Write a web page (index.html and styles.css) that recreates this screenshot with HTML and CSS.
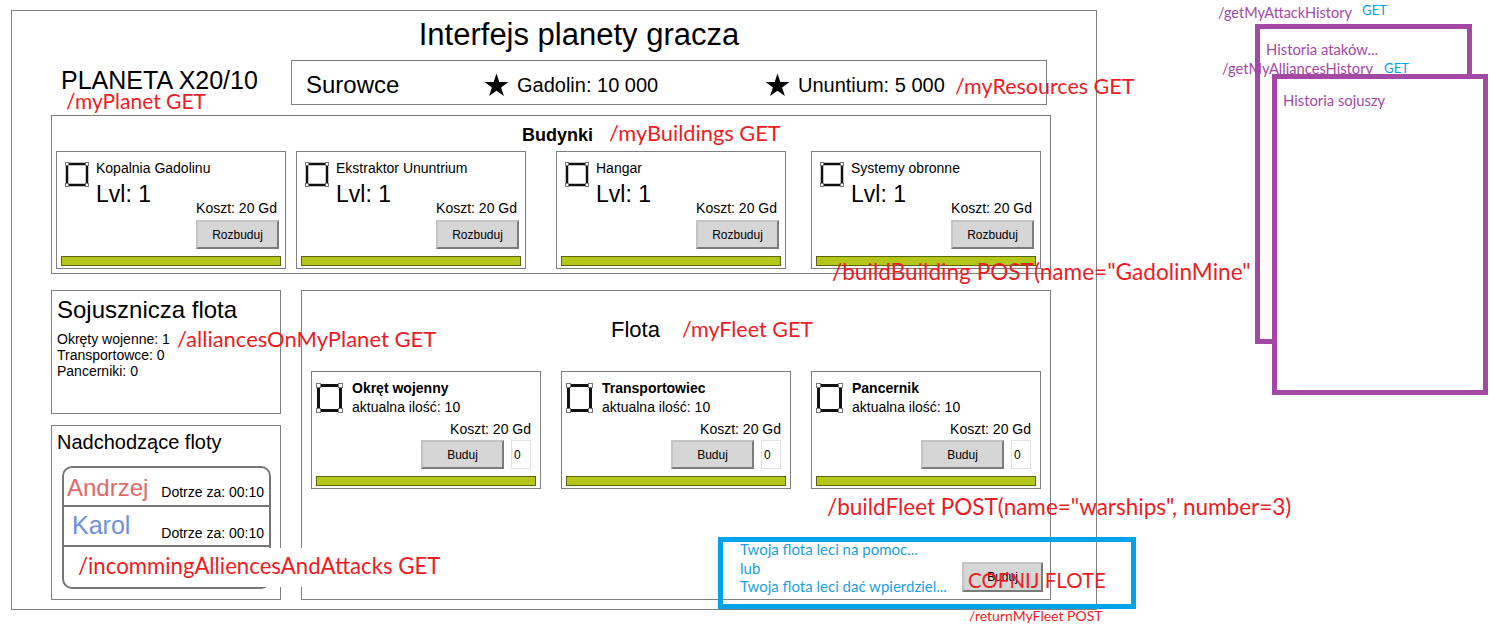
FILE: index.html
```html
<!DOCTYPE html>
<html lang="pl">
<head>
    <meta charset="UTF-8">
    <meta name="viewport" content="width=device-width, initial-scale=1.0">
    <title>Interfejs planety gracza</title>
    <link rel="stylesheet" href="styles.css">
</head>
<body>
    <!-- ikony -->
    <svg class="defs" aria-hidden="true">
        <symbol id="ico-building" viewBox="0 0 24 25">
            <rect x="2" y="2" width="20" height="21" fill="none" stroke="#111" stroke-width="2.5"/>
            <rect x="0.5" y="0.5" width="3" height="3" fill="#fff" stroke="#777"/>
            <rect x="20.5" y="0.5" width="3" height="3" fill="#fff" stroke="#777"/>
            <rect x="0.5" y="21.5" width="3" height="3" fill="#fff" stroke="#777"/>
            <rect x="20.5" y="21.5" width="3" height="3" fill="#fff" stroke="#777"/>
        </symbol>
        <symbol id="ico-ship" viewBox="0 0 27 30">
            <rect x="2.5" y="2.5" width="22" height="25" fill="none" stroke="#111" stroke-width="3"/>
            <rect x="0.5" y="0.5" width="4" height="4" fill="#fff" stroke="#777"/>
            <rect x="22.5" y="0.5" width="4" height="4" fill="#fff" stroke="#777"/>
            <rect x="0.5" y="25.5" width="4" height="4" fill="#fff" stroke="#777"/>
            <rect x="22.5" y="25.5" width="4" height="4" fill="#fff" stroke="#777"/>
        </symbol>
        <symbol id="ico-star" viewBox="0 0 25 24">
            <polygon points="12.5,0.5 15.3,9.1 24.4,9.1 17.1,14.5 19.9,23.1 12.5,17.8 5.1,23.1 7.9,14.5 0.6,9.1 9.7,9.1" fill="#000"/>
        </symbol>
    </svg>

    <div class="page">
        <div class="frame">
            <h1 class="title">Interfejs planety gracza</h1>

            <div class="header-row">
                <div class="planet">
                    <div class="planet-name">PLANETA X20/10</div>
                    <div class="api planet-api">/myPlanet GET</div>
                </div>
                <div class="resources">
                    <div class="res-label">Surowce</div>
                    <div class="res-item">
                        <svg class="star"><use href="#ico-star"/></svg>
                        <span>Gadolin: 10 000</span>
                    </div>
                    <div class="res-item">
                        <svg class="star"><use href="#ico-star"/></svg>
                        <span>Ununtium: 5 000</span>
                    </div>
                </div>
            </div>

            <!-- Budynki -->
            <section class="box buildings">
                <div class="box-head">
                    <span class="head-bold">Budynki</span>
                    <span class="api">/myBuildings GET</span>
                </div>
                <div class="card-row">
                    <div class="card">
                        <div class="card-top">
                            <svg class="icon"><use href="#ico-building"/></svg>
                            <div class="card-name">Kopalnia Gadolinu</div>
                            <div class="card-level">Lvl: 1</div>
                            <div class="card-actions">
                                <div class="cost">Koszt: 20 Gd</div>
                                <button class="btn">Rozbuduj</button>
                            </div>
                        </div>
                        <div class="bar"></div>
                    </div>
                    <div class="card">
                        <div class="card-top">
                            <svg class="icon"><use href="#ico-building"/></svg>
                            <div class="card-name">Ekstraktor Ununtrium</div>
                            <div class="card-level">Lvl: 1</div>
                            <div class="card-actions">
                                <div class="cost">Koszt: 20 Gd</div>
                                <button class="btn">Rozbuduj</button>
                            </div>
                        </div>
                        <div class="bar"></div>
                    </div>
                    <div class="card">
                        <div class="card-top">
                            <svg class="icon"><use href="#ico-building"/></svg>
                            <div class="card-name">Hangar</div>
                            <div class="card-level">Lvl: 1</div>
                            <div class="card-actions">
                                <div class="cost">Koszt: 20 Gd</div>
                                <button class="btn">Rozbuduj</button>
                            </div>
                        </div>
                        <div class="bar"></div>
                    </div>
                    <div class="card">
                        <div class="card-top">
                            <svg class="icon"><use href="#ico-building"/></svg>
                            <div class="card-name">Systemy obronne</div>
                            <div class="card-level">Lvl: 1</div>
                            <div class="card-actions">
                                <div class="cost">Koszt: 20 Gd</div>
                                <button class="btn">Rozbuduj</button>
                            </div>
                        </div>
                        <div class="bar"></div>
                    </div>
                </div>
            </section>

            <div class="bottom-row">
                <div class="side">
                    <!-- Sojusznicza flota -->
                    <section class="box allies">
                        <div class="side-title">Sojusznicza flota</div>
                        <div class="allies-list">
                            <div>Okręty wojenne: 1</div>
                            <div>Transportowce: 0</div>
                            <div>Pancerniki: 0</div>
                        </div>
                    </section>

                    <!-- Nadchodzące floty -->
                    <section class="box incoming">
                        <div class="incoming-title">Nadchodzące floty</div>
                        <div class="incoming-list">
                            <div class="in-row">
                                <span class="in-name ally">Andrzej</span>
                                <span class="in-eta">Dotrze za: 00:10</span>
                            </div>
                            <div class="in-row">
                                <span class="in-name enemy">Karol</span>
                                <span class="in-eta">Dotrze za: 00:10</span>
                            </div>
                            <div class="in-row"></div>
                        </div>
                    </section>
                </div>

                <!-- Flota -->
                <section class="box fleet">
                    <div class="box-head">
                        <span class="head-title">Flota</span>
                        <span class="api">/myFleet GET</span>
                    </div>
                    <div class="card-row">
                        <div class="card ship">
                            <div class="card-top">
                                <svg class="icon"><use href="#ico-ship"/></svg>
                                <div class="card-name">Okręt wojenny</div>
                                <div class="card-count">aktualna ilość: 10</div>
                                <div class="card-actions">
                                    <div class="cost">Koszt: 20 Gd</div>
                                    <div class="order">
                                        <button class="btn">Buduj</button>
                                        <input class="qty" type="text" value="0">
                                    </div>
                                </div>
                            </div>
                            <div class="bar"></div>
                        </div>
                        <div class="card ship">
                            <div class="card-top">
                                <svg class="icon"><use href="#ico-ship"/></svg>
                                <div class="card-name">Transportowiec</div>
                                <div class="card-count">aktualna ilość: 10</div>
                                <div class="card-actions">
                                    <div class="cost">Koszt: 20 Gd</div>
                                    <div class="order">
                                        <button class="btn">Buduj</button>
                                        <input class="qty" type="text" value="0">
                                    </div>
                                </div>
                            </div>
                            <div class="bar"></div>
                        </div>
                        <div class="card ship">
                            <div class="card-top">
                                <svg class="icon"><use href="#ico-ship"/></svg>
                                <div class="card-name">Pancernik</div>
                                <div class="card-count">aktualna ilość: 10</div>
                                <div class="card-actions">
                                    <div class="cost">Koszt: 20 Gd</div>
                                    <div class="order">
                                        <button class="btn">Buduj</button>
                                        <input class="qty" type="text" value="0">
                                    </div>
                                </div>
                            </div>
                            <div class="bar"></div>
                        </div>
                    </div>
                </section>
            </div>
        </div>

        <!-- Opisy API -->
        <div class="api note note-resources">/myResources GET</div>
        <div class="api note note-build-building">/buildBuilding POST(name="GadolinMine"</div>
        <div class="api note note-alliances">/alliancesOnMyPlanet GET</div>
        <div class="api note note-build-fleet">/buildFleet POST(name="warships", number=3)</div>
        <div class="api note note-incoming">/incommingAlliencesAndAttacks GET</div>

        <!-- Powrót floty -->
        <div class="return-panel">
            <div class="return-text">
                <div>Twoja flota leci na pomoc...</div>
                <div>lub</div>
                <div>Twoja flota leci dać wpierdziel...</div>
            </div>
            <button class="btn return-btn">Buduj</button>
        </div>
        <div class="api note note-cofnij">COFNIJ FLOTE</div>
        <div class="api note note-return">/returnMyFleet POST</div>

        <!-- Historia -->
        <div class="note note-purple note-attacks">/getMyAttackHistory</div>
        <div class="note note-get note-get-attacks">GET</div>
        <div class="note note-purple note-alliances-h">/getMyAlliancesHistory</div>
        <div class="note note-get note-get-alliances">GET</div>

        <div class="history history-attacks">
            <div class="history-text">Historia ataków...</div>
        </div>
        <div class="history history-alliances">
            <div class="history-text">Historia sojuszy</div>
        </div>
    </div>
</body>
</html>
```

FILE: styles.css
```css
* {
    box-sizing: border-box;
}

body {
    margin: 0;
    font-family: "Liberation Sans", Arial, sans-serif;
    color: #000;
    background: #fff;
}

.defs {
    position: absolute;
    width: 0;
    height: 0;
    overflow: hidden;
}

.page {
    position: relative;
    width: 1492px;
    height: 628px;
    padding: 10px 0 0 11px;
    overflow: hidden;
}

.frame {
    width: 1086px;
    height: 600px;
    border: 1px solid #7f7f7f;
    padding: 6px 45px 9px 39px;
}

.title {
    margin: 0;
    padding-left: 56px;
    font-size: 31px;
    font-weight: normal;
    line-height: 36px;
    text-align: center;
}

/* naglowek */
.header-row {
    display: flex;
    height: 45px;
    margin-top: 7px;
}

.planet {
    width: 240px;
    padding: 6px 0 0 10px;
}

.planet-name {
    font-size: 25px;
    line-height: 28px;
}

.planet-api {
    margin: -4px 0 0 5px;
    font-size: 21.6px;
}

.resources {
    display: flex;
    align-items: center;
    width: 756px;
    border: 1px solid #7f7f7f;
    padding: 4px 0 0 14px;
}

.res-label {
    width: 178px;
    font-size: 24px;
    line-height: 28px;
}

.res-item {
    display: flex;
    align-items: center;
    gap: 8px;
    width: 281px;
    font-size: 20px;
    line-height: 24px;
}

.star {
    width: 25px;
    height: 24px;
}

/* pudelka */
.box {
    border: 1px solid #7f7f7f;
}

.box-head {
    display: flex;
    align-items: baseline;
}

.buildings {
    height: 159px;
    margin-top: 10px;
    padding: 6px 0 4px;
}

.buildings .box-head {
    height: 22px;
    padding-left: 470px;
}

.head-bold {
    font-size: 18px;
    font-weight: bold;
    line-height: 20px;
}

.buildings .api {
    margin-left: 16px;
    font-size: 21.8px;
}

.card-row {
    display: flex;
}

.buildings .card-row {
    margin-top: 7px;
    padding-left: 4px;
}

.buildings .card:nth-child(2) {
    margin-left: 10px;
}

.buildings .card:nth-child(3) {
    margin-left: 30px;
}

.buildings .card:nth-child(4) {
    margin-left: 25px;
}

.card {
    display: flex;
    flex-direction: column;
    width: 230px;
    height: 118px;
    border: 1px solid #7f7f7f;
    padding-bottom: 2px;
}

.card-top {
    flex: 1;
    display: grid;
    grid-template-columns: 24px 1fr;
    grid-template-rows: auto auto 1fr;
    column-gap: 7px;
    padding: 8px 6px 0 8px;
}

.icon {
    grid-column: 1;
    grid-row: 1 / 3;
    width: 24px;
    height: 25px;
    margin-top: 2px;
}

.card-name {
    grid-column: 2;
    grid-row: 1;
    font-size: 14px;
    line-height: 16px;
    white-space: nowrap;
}

.card-level {
    grid-column: 2;
    grid-row: 2;
    margin-top: 5px;
    font-size: 23px;
    line-height: 26px;
}

.card-actions {
    grid-column: 1 / -1;
    grid-row: 2 / 4;
    justify-self: end;
    align-self: end;
    display: flex;
    flex-direction: column;
    align-items: flex-end;
    gap: 4px;
}

.cost {
    font-size: 14px;
    line-height: 16px;
    padding-right: 2px;
}

.btn {
    width: 83px;
    height: 29px;
    padding: 0;
    font-family: "Liberation Sans", Arial, sans-serif;
    font-size: 12px;
    color: #000;
    background: #d6d6d6;
    border: 2px solid;
    border-color: #c4c4c4 #7b7b7b #7b7b7b #c4c4c4;
}

.bar {
    height: 10px;
    margin: 7px 4px 0;
    background: #b4c61a;
    border: 1px solid #5b650c;
}

/* dolny rzad */
.bottom-row {
    display: flex;
    gap: 20px;
    height: 310px;
    margin-top: 16px;
}

.side {
    display: flex;
    flex-direction: column;
    gap: 11px;
    width: 230px;
}

.allies {
    height: 124px;
    padding: 5px 0 0 5px;
}

.side-title {
    font-size: 24px;
    line-height: 28px;
}

.allies-list {
    margin-top: 7px;
    font-size: 14px;
    line-height: 16px;
}

.incoming {
    height: 175px;
    padding: 4px 0 0 5px;
}

.incoming-title {
    font-size: 20px;
    line-height: 24px;
}

.incoming-list {
    display: flex;
    flex-direction: column;
    width: 209px;
    height: 123px;
    margin: 12px 0 0 5px;
    border: 2px solid #767676;
    border-radius: 10px;
}

.in-row {
    display: flex;
    justify-content: space-between;
    align-items: flex-start;
    height: 39px;
    padding: 0 5px 0 3px;
    border-bottom: 2px solid #767676;
}

.in-row:nth-child(2) {
    height: 40px;
}

.in-row:last-child {
    flex: 1;
    border-bottom: none;
}

.in-name {
    font-size: 24px;
    line-height: 28px;
    margin-top: 6px;
}

.in-eta {
    font-size: 14px;
    line-height: 16px;
    margin-top: 16px;
}

.ally {
    color: #df6868;
}

.enemy {
    margin: 4px 0 0 5px;
    font-size: 25px;
    color: #6d8fdc;
}

.in-row:nth-child(2) .in-eta {
    margin-top: 18px;
}

.fleet {
    flex: 1;
    padding-top: 26px;
}

.fleet .box-head {
    height: 25px;
    padding-left: 309px;
}

.head-title {
    font-size: 22px;
    line-height: 25px;
}

.fleet .api {
    margin-left: 22px;
    font-size: 21.5px;
}

.fleet .card-row {
    gap: 20px;
    margin-top: 29px;
    padding-left: 9px;
}

.ship .card-top {
    grid-template-columns: 27px 1fr;
    column-gap: 9px;
    padding: 8px 9px 0 4px;
}

.ship .icon {
    width: 27px;
    height: 30px;
    margin-top: 3px;
}

.ship .card-name {
    font-weight: bold;
}

.card-count {
    grid-column: 2;
    grid-row: 2;
    margin-top: 3px;
    font-size: 14px;
    line-height: 16px;
}

.ship .card-actions {
    gap: 3px;
}

.ship .cost {
    padding-right: 0;
}

.order {
    display: flex;
    gap: 7px;
}

.qty {
    width: 20px;
    height: 29px;
    padding: 0 0 0 2px;
    font-family: "Liberation Sans", Arial, sans-serif;
    font-size: 12px;
    border: 1px solid #e2e2e2;
    background: #fff;
}

/* opisy API */
.api {
    font-family: Lato, "Open Sans", sans-serif;
    font-size: 21px;
    line-height: 1;
    color: #ed1c24;
    white-space: nowrap;
}

.note {
    position: absolute;
    white-space: nowrap;
    line-height: 1;
}

.note-resources {
    left: 955px;
    top: 76px;
    font-size: 21.5px;
}

.note-build-building {
    left: 832px;
    top: 261px;
    font-size: 22.6px;
}

.note-alliances {
    left: 177px;
    top: 328px;
    font-size: 22px;
}

.note-build-fleet {
    left: 827px;
    top: 496px;
    font-size: 22.5px;
}

.note-incoming {
    left: 74px;
    top: 548px;
    height: 39px;
    padding: 7px 6px 0 4px;
    font-size: 22.2px;
    background: #fff;
}

.return-panel {
    position: absolute;
    left: 718px;
    top: 537px;
    width: 418px;
    height: 72px;
    display: flex;
    border: 5px solid #00a2e8;
    padding-left: 17px;
}

.return-text {
    width: 222px;
    margin-top: -2px;
    font-family: Lato, "Open Sans", sans-serif;
    font-size: 15px;
    line-height: 18.5px;
    color: #1ba1e2;
    white-space: nowrap;
}

.return-btn {
    width: 81px;
    height: 30px;
    margin-top: 20px;
}

.note-cofnij {
    left: 968px;
    top: 570px;
    font-size: 20.5px;
}

.note-return {
    left: 969px;
    top: 609px;
    font-size: 14px;
}

.note-purple,
.note-get,
.history-text {
    font-family: Lato, "Open Sans", sans-serif;
    font-size: 14px;
}

.note-purple,
.history-text {
    color: #a349a4;
}

.note-get {
    color: #00a2e8;
    font-size: 13.2px;
}

.note-attacks {
    left: 1218px;
    top: 6px;
    font-size: 14.5px;
}

.note-get-attacks {
    left: 1362px;
    top: 4px;
}

.note-alliances-h {
    left: 1222px;
    top: 61px;
    font-size: 14.7px;
}

.note-get-alliances {
    left: 1384px;
    top: 62px;
}

.history {
    position: absolute;
    border: 5px solid #a349a4;
}

.history-attacks {
    left: 1255px;
    top: 24px;
    width: 217px;
    height: 320px;
    padding: 13px 0 0 6px;
}

.history-alliances {
    left: 1272px;
    top: 74px;
    width: 216px;
    height: 321px;
    padding: 14px 0 0 6px;
    background: #fff;
}

.history-text {
    font-size: 14.8px;
    line-height: 1;
}
```
